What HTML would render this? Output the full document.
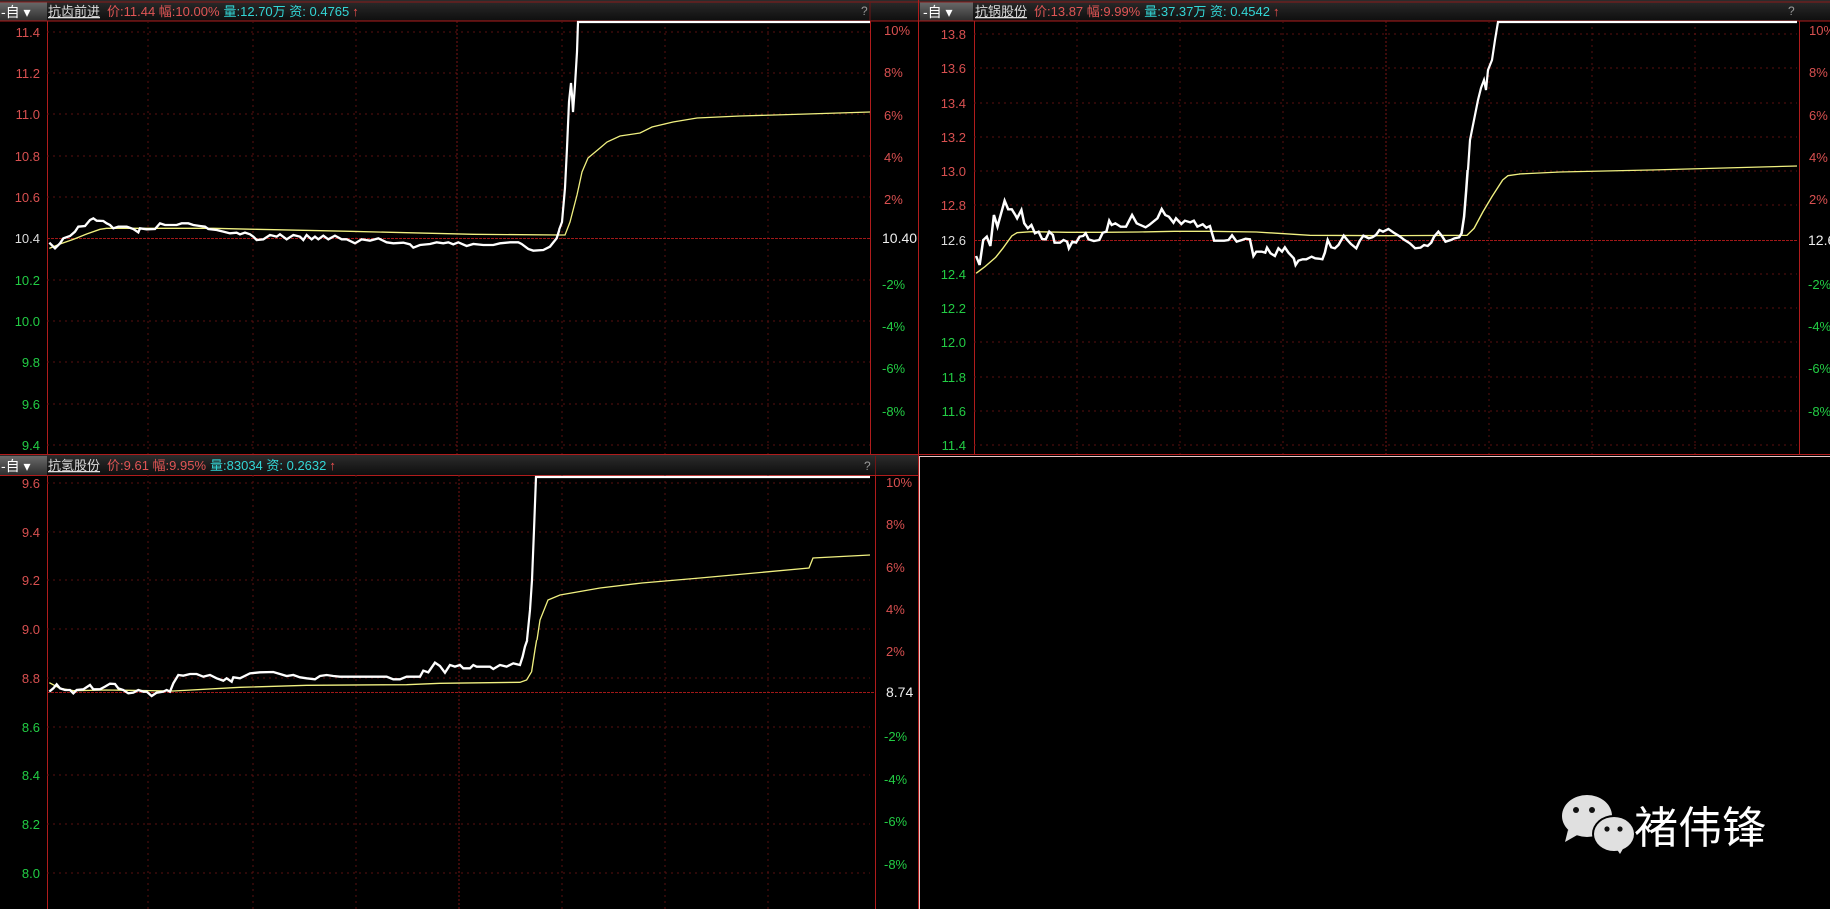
<!DOCTYPE html>
<html><head><meta charset="utf-8"><style>
html,body{margin:0;padding:0;background:#000;width:1830px;height:909px;overflow:hidden}
svg{display:block}
text{font-family:"Liberation Sans","Noto Sans CJK SC",sans-serif}
</style></head><body>
<svg width="1830" height="909" viewBox="0 0 1830 909" xmlns="http://www.w3.org/2000/svg">
<defs>
<linearGradient id="hb" x1="0" y1="0" x2="0" y2="1"><stop offset="0" stop-color="#2c2c2c"/><stop offset="1" stop-color="#0e0e0e"/></linearGradient>
<linearGradient id="bx" x1="0" y1="0" x2="0" y2="1"><stop offset="0" stop-color="#6a6a6a"/><stop offset="1" stop-color="#2e2e2e"/></linearGradient>
</defs>
<rect width="1830" height="909" fill="#000"/>

<!-- ===== TOP LEFT ===== -->
<rect x="0" y="0" width="918" height="21" fill="url(#hb)"/>
<rect x="0" y="2" width="47" height="19" fill="url(#bx)"/>
<text x="1" y="17" fill="#fff" font-size="14">-自 ▾</text>
<line x1="0" y1="2" x2="918" y2="2" stroke="#8a1a1a"/>
<line x1="0" y1="21" x2="918" y2="21" stroke="#b01c1c"/>
<text x="48" y="16" font-size="13"><tspan fill="#ddd" text-decoration="underline">抗齿前进</tspan><tspan fill="#e05555" dx="7">价:11.44 幅:10.00%</tspan><tspan fill="#33d6d6" dx="4">量:12.70万 资: 0.4765</tspan><tspan fill="#f05050" dx="3">↑</tspan></text>
<text x="861" y="15" fill="#999" font-size="12">?</text>
<line x1="870" y1="2" x2="870" y2="21" stroke="#701515"/>
<line x1="47.5" y1="21" x2="47.5" y2="454" stroke="#b01c1c"/>
<line x1="870.5" y1="21" x2="870.5" y2="454" stroke="#b01c1c"/>
<line x1="918.5" y1="0" x2="918.5" y2="909" stroke="#b01c1c"/>
<line x1="0" y1="454.5" x2="918" y2="454.5" stroke="#b01c1c"/>
<g stroke="#5a1010" stroke-dasharray="2,4">
<line x1="47" y1="32" x2="870" y2="32"/><line x1="47" y1="73" x2="870" y2="73"/><line x1="47" y1="114" x2="870" y2="114"/><line x1="47" y1="156" x2="870" y2="156"/><line x1="47" y1="197" x2="870" y2="197"/><line x1="47" y1="280" x2="870" y2="280"/><line x1="47" y1="321" x2="870" y2="321"/><line x1="47" y1="362" x2="870" y2="362"/><line x1="47" y1="404" x2="870" y2="404"/><line x1="47" y1="445" x2="870" y2="445"/>
<line x1="148" y1="21" x2="148" y2="454"/><line x1="253" y1="21" x2="253" y2="454"/><line x1="356" y1="21" x2="356" y2="454"/><line x1="562" y1="21" x2="562" y2="454"/><line x1="665" y1="21" x2="665" y2="454"/><line x1="768" y1="21" x2="768" y2="454"/>
</g>
<line x1="457" y1="21" x2="457" y2="454" stroke="#7a1515" stroke-dasharray="2,2"/>
<line x1="47" y1="238.5" x2="870" y2="238.5" stroke="#a01818" stroke-dasharray="3,1"/>
<g font-size="13" text-anchor="end">
<text x="40" y="37" fill="#d85050">11.4</text><text x="40" y="78" fill="#d85050">11.2</text><text x="40" y="119" fill="#d85050">11.0</text><text x="40" y="161" fill="#d85050">10.8</text><text x="40" y="202" fill="#d85050">10.6</text><text x="40" y="243" fill="#ddd">10.4</text><text x="40" y="285" fill="#22cc44">10.2</text><text x="40" y="326" fill="#22cc44">10.0</text><text x="40" y="367" fill="#22cc44">9.8</text><text x="40" y="409" fill="#22cc44">9.6</text><text x="40" y="450" fill="#22cc44">9.4</text>
</g>
<g font-size="13">
<text x="884" y="35" fill="#d85050">10%</text><text x="884" y="77" fill="#d85050">8%</text><text x="884" y="120" fill="#d85050">6%</text><text x="884" y="162" fill="#d85050">4%</text><text x="884" y="204" fill="#d85050">2%</text><text x="882" y="243" fill="#eee" font-family="Liberation Serif,serif" font-size="14">10.40</text><text x="882" y="289" fill="#22cc44">-2%</text><text x="882" y="331" fill="#22cc44">-4%</text><text x="882" y="373" fill="#22cc44">-6%</text><text x="882" y="416" fill="#22cc44">-8%</text>
</g>
<g transform="translate(40,200) scale(0.3333)" fill="none">
<polyline stroke="#f0f080" stroke-width="4" points="28,145 60,132 100,118 140,102 180,88 200,85 520,85 650,88 930,94 1300,103 1560,105"/>
<polyline stroke="#fff" stroke-width="7" points="28,128 45,145 60,130 70,115 90,108 105,95 115,80 135,78 150,60 160,55 170,62 190,63 200,70 210,75 220,85 235,80 260,80 280,87 295,97 300,85 320,88 345,87 360,70 375,75 410,75 425,70 445,70 460,75 480,78 495,80 505,87 530,90 550,95 570,100 590,98 600,103 615,98 630,103 640,110 650,120 670,118 690,105 710,110 720,103 740,118 760,105 780,110 790,120 800,105 815,118 825,110 835,118 850,107 865,118 885,107 905,118 920,118 945,130 965,118 990,122 1015,115 1040,127 1060,130 1090,128 1110,133 1120,143 1140,135 1170,132 1190,127 1210,130 1225,127 1240,133 1255,127 1280,138 1300,132 1330,135 1360,135 1380,130 1410,127 1435,127 1445,132 1465,147 1480,152 1510,150 1530,140 1550,115 1558,90"/>
</g>
<polyline fill="none" stroke="#fff" stroke-width="2.2" points="559,230 562,222 565,188 567,148 569,102 571,83 572,95 573,112 575,85 577,52 578,22 870,22"/>
<polyline fill="none" stroke="#f0f080" stroke-width="1.3" points="560,235 565,235 570,222 577,195 582,172 588,158 600,148 607,142 620,136 640,133 652,127 673,122 697,118 740,116 807,114 870,112"/>

<!-- ===== TOP RIGHT ===== -->
<rect x="919" y="0" width="911" height="21" fill="url(#hb)"/>
<rect x="920" y="2" width="53" height="19" fill="url(#bx)"/>
<text x="923" y="17" fill="#fff" font-size="14">-自 ▾</text>
<line x1="919" y1="2" x2="1830" y2="2" stroke="#8a1a1a"/>
<line x1="919" y1="21" x2="1830" y2="21" stroke="#b01c1c"/>
<text x="975" y="16" font-size="13"><tspan fill="#ddd" text-decoration="underline">抗锅股份</tspan><tspan fill="#e05555" dx="7">价:13.87 幅:9.99%</tspan><tspan fill="#33d6d6" dx="4">量:37.37万 资: 0.4542</tspan><tspan fill="#f05050" dx="3">↑</tspan></text>
<text x="1788" y="15" fill="#999" font-size="12">?</text>
<line x1="974.5" y1="21" x2="974.5" y2="454" stroke="#b01c1c"/>
<line x1="1799.5" y1="21" x2="1799.5" y2="454" stroke="#b01c1c"/>
<line x1="919" y1="454.5" x2="1830" y2="454.5" stroke="#b01c1c"/>
<g stroke="#5a1010" stroke-dasharray="2,4">
<line x1="974" y1="34" x2="1797" y2="34"/><line x1="974" y1="68" x2="1797" y2="68"/><line x1="974" y1="103" x2="1797" y2="103"/><line x1="974" y1="137" x2="1797" y2="137"/><line x1="974" y1="171" x2="1797" y2="171"/><line x1="974" y1="205" x2="1797" y2="205"/><line x1="974" y1="274" x2="1797" y2="274"/><line x1="974" y1="308" x2="1797" y2="308"/><line x1="974" y1="342" x2="1797" y2="342"/><line x1="974" y1="377" x2="1797" y2="377"/><line x1="974" y1="411" x2="1797" y2="411"/><line x1="974" y1="445" x2="1797" y2="445"/>
<line x1="1077" y1="21" x2="1077" y2="454"/><line x1="1180" y1="21" x2="1180" y2="454"/><line x1="1283" y1="21" x2="1283" y2="454"/><line x1="1489" y1="21" x2="1489" y2="454"/><line x1="1592" y1="21" x2="1592" y2="454"/><line x1="1695" y1="21" x2="1695" y2="454"/>
</g>
<line x1="1386" y1="21" x2="1386" y2="454" stroke="#7a1515" stroke-dasharray="2,2"/>
<line x1="974" y1="240.5" x2="1797" y2="240.5" stroke="#a01818" stroke-dasharray="3,1"/>
<g font-size="13" text-anchor="end">
<text x="966" y="39" fill="#d85050">13.8</text><text x="966" y="73" fill="#d85050">13.6</text><text x="966" y="108" fill="#d85050">13.4</text><text x="966" y="142" fill="#d85050">13.2</text><text x="966" y="176" fill="#d85050">13.0</text><text x="966" y="210" fill="#d85050">12.8</text><text x="966" y="245" fill="#ddd">12.6</text><text x="966" y="279" fill="#22cc44">12.4</text><text x="966" y="313" fill="#22cc44">12.2</text><text x="966" y="347" fill="#22cc44">12.0</text><text x="966" y="382" fill="#22cc44">11.8</text><text x="966" y="416" fill="#22cc44">11.6</text><text x="966" y="450" fill="#22cc44">11.4</text>
</g>
<g font-size="13">
<text x="1809" y="35" fill="#d85050">10%</text><text x="1809" y="77" fill="#d85050">8%</text><text x="1809" y="120" fill="#d85050">6%</text><text x="1809" y="162" fill="#d85050">4%</text><text x="1809" y="204" fill="#d85050">2%</text><text x="1808" y="245" fill="#eee" font-family="Liberation Serif,serif" font-size="14">12.60</text><text x="1808" y="289" fill="#22cc44">-2%</text><text x="1808" y="331" fill="#22cc44">-4%</text><text x="1808" y="373" fill="#22cc44">-6%</text><text x="1808" y="416" fill="#22cc44">-8%</text>
</g>
<g transform="translate(960,170) scale(0.357,0.3333)" fill="none">
<polyline stroke="#f0f080" stroke-width="4" points="45,310 70,290 100,262 120,235 130,220 145,198 160,188 200,185 300,187 400,187 500,186 600,184 700,184 830,186 980,196 1200,197 1420,196 1440,175 1465,125 1490,80 1520,30 1535,17 1568,12"/>
<polyline stroke="#fff" stroke-width="7" points="45,258 55,285 65,210 75,200 85,228 95,135 105,170 110,150 125,92 135,118 145,118 155,135 160,145 172,120 180,160 190,175 200,165 210,190 220,185 230,207 240,208 250,185 260,195 265,218 280,218 290,210 300,215 305,235 315,215 325,218 335,200 345,198 352,190 360,208 375,213 390,210 400,188 410,185 418,152 425,165 435,160 450,170 465,170 482,135 495,160 505,165 520,172 530,165 545,152 553,145 565,117 575,135 585,140 598,158 605,145 620,162 630,152 645,157 655,152 665,170 680,163 690,173 700,168 712,212 725,212 740,212 752,210 762,196 775,215 790,210 800,206 812,208 822,258 830,245 845,245 855,248 860,233 870,250 882,258 892,235 902,245 910,232 920,248 935,265 940,285 948,272 960,268 970,268 985,260 995,265 1005,266 1015,268 1022,248 1030,210 1040,232 1050,235 1060,225 1075,197 1085,210 1095,222 1110,235 1120,212 1130,197 1145,205 1155,202 1165,195 1175,180 1185,185 1200,177 1215,188 1230,198 1245,210 1260,220 1275,235 1290,233 1300,225 1310,228 1320,218 1328,200 1340,185 1350,198 1360,215 1375,210 1385,205 1398,202 1405,190 1412,140 1418,60 1422,0"/>
</g>
<polyline fill="none" stroke="#fff" stroke-width="2.2" points="1468,170 1470,140 1474,120 1478,100 1481,88 1484,80 1486,90 1488,70 1492,60 1495,40 1498,22 1797,22"/>
<polyline fill="none" stroke="#f0f080" stroke-width="1.3" points="1519,174 1560,172 1650,170 1797,166"/>

<!-- ===== BOTTOM LEFT ===== -->
<rect x="0" y="455" width="918" height="20" fill="url(#hb)"/>
<rect x="0" y="456" width="47" height="19" fill="url(#bx)"/>
<text x="1" y="471" fill="#fff" font-size="14">-自 ▾</text>
<line x1="0" y1="475.5" x2="918" y2="475.5" stroke="#b01c1c"/>
<text x="48" y="470" font-size="13"><tspan fill="#ddd" text-decoration="underline">抗氢股份</tspan><tspan fill="#e05555" dx="7">价:9.61 幅:9.95%</tspan><tspan fill="#33d6d6" dx="4">量:83034 资: 0.2632</tspan><tspan fill="#f05050" dx="3">↑</tspan></text>
<text x="864" y="470" fill="#999" font-size="12">?</text>
<line x1="47.5" y1="475" x2="47.5" y2="909" stroke="#b01c1c"/>
<line x1="875.5" y1="475" x2="875.5" y2="909" stroke="#b01c1c"/>
<line x1="875.5" y1="456" x2="875.5" y2="475" stroke="#701515"/>
<g stroke="#5a1010" stroke-dasharray="2,4">
<line x1="47" y1="483" x2="870" y2="483"/><line x1="47" y1="532" x2="870" y2="532"/><line x1="47" y1="580" x2="870" y2="580"/><line x1="47" y1="629" x2="870" y2="629"/><line x1="47" y1="678" x2="870" y2="678"/><line x1="47" y1="727" x2="870" y2="727"/><line x1="47" y1="775" x2="870" y2="775"/><line x1="47" y1="824" x2="870" y2="824"/><line x1="47" y1="873" x2="870" y2="873"/>
<line x1="148" y1="475" x2="148" y2="909"/><line x1="253" y1="475" x2="253" y2="909"/><line x1="356" y1="475" x2="356" y2="909"/><line x1="562" y1="475" x2="562" y2="909"/><line x1="665" y1="475" x2="665" y2="909"/><line x1="768" y1="475" x2="768" y2="909"/>
</g>
<line x1="459" y1="475" x2="459" y2="909" stroke="#7a1515" stroke-dasharray="2,2"/>
<line x1="47" y1="692.5" x2="875" y2="692.5" stroke="#a01818" stroke-dasharray="3,1"/>
<g font-size="13" text-anchor="end">
<text x="40" y="488" fill="#d85050">9.6</text><text x="40" y="537" fill="#d85050">9.4</text><text x="40" y="585" fill="#d85050">9.2</text><text x="40" y="634" fill="#d85050">9.0</text><text x="40" y="683" fill="#d85050">8.8</text><text x="40" y="732" fill="#22cc44">8.6</text><text x="40" y="780" fill="#22cc44">8.4</text><text x="40" y="829" fill="#22cc44">8.2</text><text x="40" y="878" fill="#22cc44">8.0</text>
</g>
<g font-size="13">
<text x="886" y="487" fill="#d85050">10%</text><text x="886" y="529" fill="#d85050">8%</text><text x="886" y="572" fill="#d85050">6%</text><text x="886" y="614" fill="#d85050">4%</text><text x="886" y="656" fill="#d85050">2%</text><text x="886" y="697" fill="#eee" font-family="Liberation Serif,serif" font-size="14">8.74</text><text x="884" y="741" fill="#22cc44">-2%</text><text x="884" y="784" fill="#22cc44">-4%</text><text x="884" y="826" fill="#22cc44">-6%</text><text x="884" y="869" fill="#22cc44">-8%</text>
</g>
<g transform="translate(40,640) scale(0.3333)" fill="none">
<polyline stroke="#f0f080" stroke-width="4" points="28,128 60,145 100,152 200,150 400,153 600,142 800,136 1100,134 1200,130 1440,127 1460,120 1475,95 1485,30 1490,0"/>
<polyline stroke="#fff" stroke-width="7" points="28,155 40,145 50,133 60,145 75,150 90,150 100,160 110,150 130,148 150,135 160,148 180,148 195,140 210,131 225,132 235,145 250,150 265,160 280,158 295,150 310,155 320,155 335,168 350,158 370,155 380,150 390,155 400,130 415,105 430,107 450,102 470,102 490,110 510,105 530,115 550,122 560,115 575,125 580,112 600,115 630,100 660,97 700,96 720,102 740,108 760,105 780,112 800,115 825,118 840,108 860,105 880,108 900,110 1040,110 1060,118 1080,118 1100,110 1140,110 1150,92 1165,97 1185,68 1200,78 1215,98 1230,75 1245,80 1260,75 1270,85 1290,85 1300,75 1310,80 1350,80 1360,87 1380,75 1400,80 1420,70 1440,75 1448,50 1455,20 1462,0"/>
</g>
<polyline fill="none" stroke="#fff" stroke-width="2.2" points="527,640 530,610 532,580 534,530 536,477 870,477"/>
<polyline fill="none" stroke="#f0f080" stroke-width="1.3" points="537,640 540,620 548,600 560,595 600,588 642,583 700,578 809,568 813,558 870,555"/>

<!-- ===== BOTTOM RIGHT ===== -->
<line x1="919" y1="456.5" x2="1830" y2="456.5" stroke="#e8c8c8"/>
<line x1="919.5" y1="456" x2="919.5" y2="909" stroke="#e8c8c8"/>
<g fill="#e0e0e0">
<ellipse cx="1587" cy="816" rx="25" ry="21"/>
<path d="M1568 830 L1565 842 L1579 834 Z"/>
<ellipse cx="1614" cy="834" rx="22" ry="19" fill="#000"/>
<ellipse cx="1614" cy="834" rx="20" ry="17"/>
<path d="M1624 847 L1620 854 L1616 848 Z"/>
</g>
<g fill="#111">
<circle cx="1576" cy="810" r="3"/><circle cx="1592" cy="810" r="3"/>
<circle cx="1607" cy="829" r="2.6"/><circle cx="1620" cy="829" r="2.6"/>
</g>
<text x="1634" y="843" fill="#fff" font-size="44" font-family="'Noto Sans CJK SC',sans-serif">褚伟锋</text>
</svg>
</body></html>
